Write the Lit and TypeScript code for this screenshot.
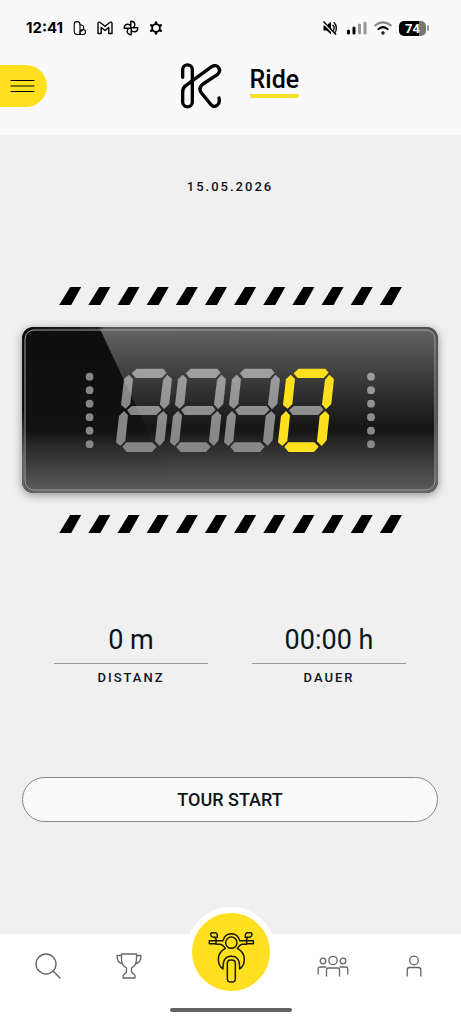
import { LitElement, html, svg, css } from "lit";
import { customElement, property } from "lit/decorators.js";
import { classMap } from "lit/directives/class-map.js";

const SEGMENTS: Record<string, string> = {
  a: "65,55 80,41 160,41 170,53 155,69 77,69",
  b: "172,59 186,72 178,147 162,163 150,148 159,75",
  c: "160,168 172,181 164,256 149,273 135,259 143,183",
  d: "37,276 49,262 127,262 140,275 126,291 50,291",
  e: "42,168 54,181 46,258 31,273 18,262 27,183",
  f: "56,59 69,72 61,147 47,161 33,150 42,73",
  g: "51,165 66,153 146,153 155,164 139,180 62,180",
};

const LIT: Record<string, string> = {
  " ": "", "0": "abcdef", "1": "bc", "2": "abged", "3": "abgcd", "4": "fgbc",
  "5": "afgcd", "6": "afgedc", "7": "abc", "8": "abcdefg", "9": "abcdfg",
};

@customElement("speed-display")
export class SpeedDisplay extends LitElement {
  @property() value = "   0";

  static styles = css`
    :host { display: block; }
    .stripes, .panel { display: block; width: 100%; }
    .panel {
      margin: 22px 0;
      border-radius: 11px;
      box-shadow: 0 2px 10px rgba(0, 0, 0, 0.4);
    }
    .off, .dot { fill: #868686; }
    .on { fill: #ffe01f; }
  `;

  private stripes() {
    return html`<svg class="stripes" viewBox="0 0 416 18" aria-hidden="true">
      ${Array.from({ length: 12 }, (_, i) => svg`
        <polygon transform="translate(${37.2 + i * 29.15} 0)" points="0,18 11,0 22,0 12,18"></polygon>`)}
    </svg>`;
  }

  private digits(lit: boolean) {
    return svg`<g transform="translate(88 28) scale(0.3333)">
      ${[...this.value].map((ch, i) => svg`<g transform="translate(${i * 162} 0)">
        ${Object.entries(SEGMENTS)
          .filter(([k]) => LIT[ch].includes(k) === lit)
          .map(([, p]) => svg`<polygon class=${classMap({ on: lit, off: !lit })} points=${p}></polygon>`)}
      </g>`)}
    </g>`;
  }

  private dots(x: number) {
    return Array.from({ length: 6 }, (_, i) => svg`
      <circle class="dot" cx=${x} cy=${49.7 + i * 13.5} r="3.9"></circle>`);
  }

  render() {
    return html`
      ${this.stripes()}
      <svg class="panel" viewBox="0 0 416 166" role="img" aria-label=${this.value.trim()}>
        <defs>
          <linearGradient id="base" x1="0" y1="0" x2="0" y2="1">
            <stop offset="0" stop-color="#0e0e0e"></stop>
            <stop offset="0.62" stop-color="#111"></stop>
            <stop offset="0.72" stop-color="#2a2a2a"></stop>
            <stop offset="1" stop-color="#5e5e5e"></stop>
          </linearGradient>
          <linearGradient id="gloss" gradientUnits="userSpaceOnUse" x1="0" y1="0" x2="0" y2="166">
            <stop offset="0" stop-color="#fff" stop-opacity="0.36"></stop>
            <stop offset="0.6" stop-color="#fff" stop-opacity="0.02"></stop>
            <stop offset="1" stop-color="#fff" stop-opacity="0"></stop>
          </linearGradient>
          <linearGradient id="rim" x1="0" y1="0" x2="1" y2="0">
            <stop offset="0" stop-color="#0c0c0c"></stop>
            <stop offset="0.18" stop-color="#222"></stop>
            <stop offset="0.2" stop-color="#5a5a5a"></stop>
            <stop offset="1" stop-color="#505050"></stop>
          </linearGradient>
          <linearGradient id="rimfade" x1="0" y1="0" x2="0" y2="1">
            <stop offset="0.5" stop-color="#666" stop-opacity="0"></stop>
            <stop offset="0.8" stop-color="#666"></stop>
          </linearGradient>
          <clipPath id="round"><rect width="416" height="166" rx="11"></rect></clipPath>
        </defs>
        <g clip-path="url(#round)">
          <rect width="416" height="166" fill="url(#base)"></rect>
          ${this.digits(false)}
          ${this.dots(67.6)}
          ${this.dots(349)}
          <polygon points="77,0 416,0 416,166 155,166" fill="url(#gloss)"></polygon>
          ${this.digits(true)}
        </g>
        <rect x="1" y="1" width="414" height="164" rx="10" fill="none" stroke="url(#rim)" stroke-width="2"></rect>
        <rect x="1" y="1" width="414" height="164" rx="10" fill="none" stroke="url(#rimfade)" stroke-width="2"></rect>
        <rect x="3" y="3" width="410" height="160" rx="9" fill="none" stroke="#a0a0a0"></rect>
      </svg>
      ${this.stripes()}
    `;
  }
}

@customElement("app-root")
export class AppRoot extends LitElement {
  static styles = css`
    :host {
      display: flex;
      flex-direction: column;
      min-height: 100vh;
      background: #f0f0f0;
      color: #0b151c;
      font-family: Roboto, sans-serif;
    }
    svg { display: block; }
    .top { background: #f9f9f9; height: 135px; color: #000; }
    .status {
      display: flex;
      justify-content: space-between;
      align-items: center;
      padding: 18px 32px 0 26px;
      height: 20px;
    }
    .group { display: flex; align-items: center; gap: 10px; }
    .right { gap: 7px; }
    .time { font: 700 15px/20px Inter, sans-serif; }
    .power { display: flex; align-items: center; gap: 1px; }
    .battery {
      width: 27px;
      height: 15px;
      border-radius: 5px;
      background: linear-gradient(90deg, #000 74%, #777 74%);
      color: #fff;
      font: 700 13px/15px Roboto, sans-serif;
      text-align: center;
    }
    .cap { width: 2px; height: 6px; border-radius: 1px; background: #999; }
    .titlebar {
      display: grid;
      grid-template-columns: 17fr auto auto 15fr;
      column-gap: 28px;
      padding-top: 24px;
    }
    .menu {
      width: 47px;
      height: 42px;
      margin-top: 3px;
      border: 0;
      padding: 0 0 0 10px;
      border-radius: 0 21px 21px 0;
      background: #ffe01f;
    }
    h1 {
      justify-self: start;
      margin: 4px 0 0;
      font: 500 25px/28px Roboto, sans-serif;
      border-bottom: 4px solid #f7df2e;
      border-radius: 2px;
      height: 28px;
    }
    main { flex: 1; padding: 42px 23px 0 22px; }
    .date {
      display: block;
      text-align: center;
      font: 500 13px/20px Roboto, sans-serif;
      letter-spacing: 2px;
    }
    speed-display { margin-top: 90px; }
    .stats {
      display: grid;
      grid-template-columns: 1fr 1fr;
      gap: 44px;
      margin: 89px 32px 0;
      text-align: center;
    }
    .stat { display: flex; flex-direction: column-reverse; }
    dd { margin: 0; font-size: 27px; line-height: 36px; padding-bottom: 5px; border-bottom: 1px solid #979a9c; }
    dt { font: 500 13px/18px Roboto, sans-serif; letter-spacing: 2px; padding-top: 5px; }
    .start {
      display: block;
      width: 100%;
      height: 45px;
      margin-top: 90px;
      border: 1px solid #85888f;
      border-radius: 23px;
      background: #fafafa;
      color: #0b151c;
      font: 500 18px/20px Roboto, sans-serif;
    }
    nav {
      display: grid;
      grid-template-columns: 1fr 1fr 123px 1fr 1fr;
      padding: 0 7px;
      height: 74px;
      background: #fff;
    }
    nav a { display: grid; place-items: center; height: 64px; color: #666; }
    nav .ride {
      justify-self: center;
      box-sizing: border-box;
      width: 90px;
      height: 90px;
      margin-top: -27px;
      border: 6px solid #fff;
      border-radius: 50%;
      background: #ffe01f;
      color: #1c1a08;
    }
    .home { background: #fff; height: 16px; display: flex; justify-content: center; }
    .bar { width: 122px; height: 4px; border-radius: 2px; background: #636363; }
    .line { fill: none; stroke: currentColor; stroke-linecap: round; stroke-linejoin: round; }
  `;

  render() {
    return html`
      <header class="top">
        <div class="status">
          <div class="group">
            <span class="time">12:41</span>
            <svg class="line" width="14" height="16" viewBox="0 0 14 16" stroke-width="1.1">
              <path d="M7 14.5H4.500A3.300 3.300 0 0 1 1.200 11.200V4.500a2.900 2.900 0 0 1 5.800 0z"></path>
              <path d="M7 4.800c2.400 0 3.800 1.600 3.800 3.200 0 1.300-1 2.500-2.600 3.200"></path>
              <path d="M7 14.500v-1.600c0-1.900 1.200-3.400 3-3.400a2.500 2.500 0 0 1 0 5z"></path>
            </svg>
            <svg class="line" width="16" height="14" viewBox="0 0 16 14" stroke-width="1.400">
              <path d="M1 12.500V2.300C1 1 2.400.8 3.200 1.500L8 5.300l4.800-3.800C13.600.8 15 1 15 2.300v10.200h-3.200V6.500L8 9.500l-3.800-3v6z"></path>
            </svg>
            <svg class="line" width="16" height="16" viewBox="0 0 16 16" stroke-width="1.400">
              <path d="M7.800 8V1.200c2.400 0 4 1.500 4 3.400 0 1-.3 1.700-.9 2.300M8 7.800h6.800c0 2.400-1.500 4-3.400 4-1 0-1.700-.3-2.300-.9M8.200 8v6.800c-2.400 0-4-1.500-4-3.400 0-1 .3-1.700.9-2.300M8 8.200H1.200c0-2.400 1.500-4 3.400-4 1 0 1.700.3 2.300.9"></path>
            </svg>
            <svg class="line" width="14" height="14" viewBox="0 0 14 14">
              <circle cx="7" cy="7" r="3.900" stroke-width="1.800"></circle>
              <path stroke-width="2.600" d="M7 1.600v.4M7 12v.4M2.300 4.300l.3.200M11.400 9.500l.3.200M2.300 9.700l.3-.2M11.400 4.500l.3-.2"></path>
            </svg>
          </div>
          <div class="group right">
            <svg width="16" height="16" viewBox="0 0 16 16">
              <path d="M1.500 5.500h3L9 1.800v12.400L4.500 10.500h-3z"></path>
              <path class="line" stroke-width="1.300" d="M11 5.300c1.300 1.500 1.300 3.900 0 5.400M12 2.600c3 2.700 3 8 .6 10.400"></path>
              <path d="M1 2.500 14 15.500" stroke="#f9f9f9" stroke-width="2"></path>
              <path d="M1.500 1.500 14 14.500" stroke="#000" stroke-width="1.500"></path>
            </svg>
            <svg class="line" width="22" height="14" viewBox="0 0 22 14" stroke-width="3">
              <path d="M3.500 10v2M9 7v5"></path><path stroke="#999" d="M14.500 4v8M20 2v10"></path>
            </svg>
            <svg class="line" width="18" height="14" viewBox="0 0 18 14" stroke-width="2.200">
              <path stroke="#888" d="M1.300 4.300c4.500-3.800 10.900-3.800 15.400 0"></path>
              <path d="M4.500 8c2.700-2.300 6.300-2.300 9 0"></path><circle cx="9" cy="12" r="0.600"></circle>
            </svg>
            <div class="power"><div class="battery">74</div><div class="cap"></div></div>
          </div>
        </div>
        <div class="titlebar">
          <button class="menu" aria-label="Menü">
            <svg class="line" width="25" height="14" viewBox="0 0 25 14" stroke-width="1.200">
              <path d="M1 1.500h23M1 7h23M1 12.500h23"></path>
            </svg>
          </button>
          <svg class="line" width="42" height="47" viewBox="541 186 126 141" stroke-width="10">
            <path d="M549 232V209a14.500 14.500 0 0 1 29 0V306a14.500 14.500 0 0 1-29 0V276Q549 263 559 256L636 200C652 189 668 208 654 223L610 252Q594 265 606 280L634 314C645 326 663 314 658 294"></path>
          </svg>
          <h1>Ride</h1>
        </div>
      </header>
      <main>
        <time class="date" datetime="2026-05-15">15.05.2026</time>
        <speed-display></speed-display>
        <dl class="stats">
          <div class="stat"><dt>DISTANZ</dt><dd>0 m</dd></div>
          <div class="stat"><dt>DAUER</dt><dd>00:00 h</dd></div>
        </dl>
        <button class="start">TOUR START</button>
      </main>
      <nav>
        <a href="#search" aria-label="Suche">
          <svg class="line" width="26" height="26" viewBox="0 0 26 26" stroke-width="1.400">
            <circle cx="11" cy="11" r="10"></circle><path d="m18 18 7 7"></path>
          </svg>
        </a>
        <a href="#trophies" aria-label="Trophäen">
          <svg class="line" width="26" height="26" viewBox="0 0 26 26" stroke-width="1.300">
            <path d="M5.500 1h15v5c0 5-2 7.500-5 9v4l3.500 3.500V25H7v-2.500l3.500-3.500v-4c-3-1.500-5-4-5-9zM5.500 2.500H1c0 4.500 1.500 7.500 5.500 8.300M20.500 2.500H25c0 4.500-1.500 7.500-5.500 8.300"></path>
          </svg>
        </a>
        <a class="ride" href="#ride" aria-label="Ride" aria-current="page">
          <svg class="line" width="48" height="61" viewBox="22 5 144 183" stroke-width="4.500">
            <circle cx="95" cy="67" r="17"></circle>
            <g id="side">
              <path d="M36 37h12q6 2 5 14H41q-7-1-8-8-1-5 3-6zM46 51l5 10"></path>
              <path d="M70 61H29v9h20M49 61v11h12q7 0 16 12C62 92 56 104 56 117c0 14 5 23 14 29 0-20 2-38 25-38M70 61C73 48 82 40 95 40"></path>
            </g>
            <g transform="translate(190 0) scale(-1 1)">
              <path d="M36 37h12q6 2 5 14H41q-7-1-8-8-1-5 3-6zM46 51l5 10"></path>
              <path d="M70 61H29v9h20M49 61v11h12q7 0 16 12C62 92 56 104 56 117c0 14 5 23 14 29 0-20 2-38 25-38M70 61C73 48 82 40 95 40"></path>
            </g>
            <rect x="83" y="119" width="24" height="66" rx="10"></rect>
          </svg>
        </a>
        <a href="#friends" aria-label="Freunde">
          <svg class="line" width="32" height="22" viewBox="0 0 32 22" stroke-width="1.300">
            <circle cx="16" cy="5.500" r="4.200"></circle><circle cx="6" cy="6" r="2.800"></circle><circle cx="26" cy="6" r="2.800"></circle>
            <path d="M9.500 21v-6q0-2 2-2h9q2 0 2 2v6M1.200 19v-5q0-2 2-2H9M30.800 19v-5q0-2-2-2H23"></path>
          </svg>
        </a>
        <a href="#profile" aria-label="Profil">
          <svg class="line" width="16" height="22" viewBox="0 0 16 22" stroke-width="1.300">
            <circle cx="8" cy="5.500" r="4.300"></circle><path d="M1.200 21v-6q0-2.500 2.500-2.500h8.600q2.500 0 2.500 2.500v6"></path>
          </svg>
        </a>
      </nav>
      <div class="home"><div class="bar"></div></div>
    `;
  }
}
